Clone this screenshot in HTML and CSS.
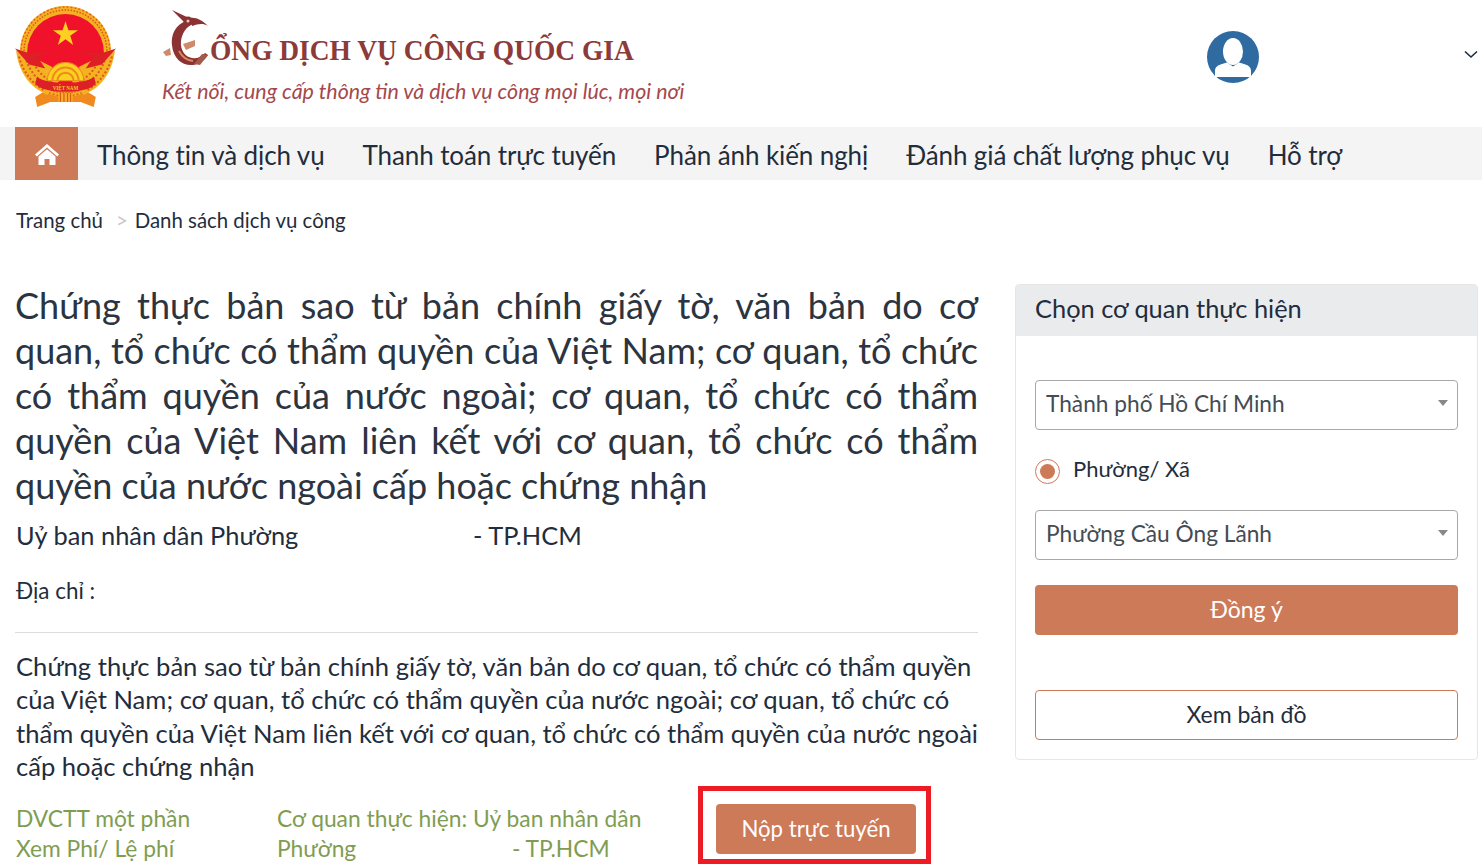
FILE: index.html
```html
<!DOCTYPE html>
<html lang="vi">
<head>
<meta charset="utf-8">
<title>Cổng Dịch vụ công Quốc gia</title>
<link rel="stylesheet" href="styles.css">
</head>
<body>
<header class="site-header">
  <svg class="emblem" viewBox="0 0 100 100" aria-hidden="true">
    <path d="M20 90 L33 82 H67 L80 90 L78 100 L65 95 H35 L22 100 Z" fill="#f08a1e"/>
    <circle cx="50" cy="45" r="45" fill="#f4b223"/>
    <circle cx="50" cy="45" r="44" fill="none" stroke="#e8601c" stroke-width="1.500" stroke-dasharray="2 2"/>
    <circle cx="50" cy="45" r="41" fill="none" stroke="#e0561c" stroke-width="1.500" stroke-dasharray="1.500 1.500"/>
    <circle cx="50" cy="46" r="38" fill="#f0112b"/>
    <path d="M50 15 L52.900 24 H62.400 L54.700 29.500 L57.600 38.500 L50 33 L42.400 38.500 L45.300 29.500 L37.600 24 H47.100 Z" fill="#fbd021"/>
    <path d="M1 44 C4 66 14 80 32 88 L44 74 L36 60 L12 48 Z" fill="#f4b223"/>
    <path d="M99 44 C96 66 86 80 68 88 L56 74 L64 60 L88 48 Z" fill="#f4b223"/>
    <path d="M4 50 C8 66 18 78 30 84 M10 50 C14 64 22 74 34 80 M17 53 C20 62 27 70 37 75" fill="none" stroke="#e0561c" stroke-width="2" stroke-dasharray="2 2"/>
    <path d="M96 50 C92 66 82 78 70 84 M90 50 C86 64 78 74 66 80 M83 53 C80 62 73 70 63 75" fill="none" stroke="#e0561c" stroke-width="2" stroke-dasharray="2 2"/>
    <path d="M0 42 L12 46 L36 46 L22 50 L30 62 L14 58 Z" fill="#dd1f26"/>
    <path d="M100 42 L88 46 L64 46 L78 50 L70 62 L86 58 Z" fill="#dd1f26"/>
    <path d="M32 74 A18 18 0 0 1 68 74 Z" fill="#fbd021" stroke="#ee8a1c" stroke-width="1"/>
    <path d="M37 74 A13 13 0 0 1 63 74 M42 74 A8 8 0 0 1 58 74" fill="none" stroke="#ee8a1c" stroke-width="2"/>
    <path d="M22 70 C30 78 70 78 78 70 L80 76 C76 88 24 88 20 76 Z" fill="#dd1f26"/>
    <text class="emblem-label" x="50" y="83" text-anchor="middle">VIỆT NAM</text>
    <path d="M43 86 H57 V95 H43 Z" fill="#f4b223"/>
    <path d="M45 86 V95 M48.500 86 V95 M52 86 V95 M55 86 V95" stroke="#e0561c" stroke-width="1.200"/>
  </svg>
  <div class="brand">
    <div class="brand-name">
      <svg class="brand-mark" viewBox="0 0 52 64" aria-hidden="true">
        <path d="M10 2 L27 10 L24 16 Z" fill="#8c3232"/>
        <path d="M29 12 C14 14 9 26 10 37 C11 50 20 58 31 57 C38 56 43 52 46 47 L43 45 C39 49 35 51 30 50 C23 49 18 42 19 33 C20 25 24 19 31 16 Z" fill="#8c3232"/>
        <circle cx="26" cy="13" r="4.500" fill="#8c3232"/>
        <circle cx="26" cy="13" r="1.500" fill="#e9c5b2"/>
        <path d="M28 10 C34 9 40 12 46 18 C41 15 36 16 30 18 Z" fill="#8c3232"/>
        <path d="M17 43 C20 49 24 52 31 53" fill="none" stroke="#d98a5e" stroke-width="1.800"/>
        <path d="M1 44 L8 40 L9 47 L4 48 Z M21 36 L33 32 L33 38 L24 42 Z" fill="#cf8a6c"/>
        <path d="M32 56 L40 46 L46 47 L38 57 Z" fill="#a55a48"/>
      </svg>
      <span class="brand-title">ỔNG DỊCH VỤ CÔNG QUỐC GIA</span>
    </div>
    <div class="brand-slogan">Kết nối, cung cấp thông tin và dịch vụ công mọi lúc, mọi nơi</div>
  </div>
  <div class="user">
    <svg class="avatar" viewBox="0 0 52 52" aria-hidden="true">
      <circle cx="26" cy="26" r="26" fill="#2f6aa0"/>
      <ellipse cx="26" cy="20.500" rx="10" ry="13.500" fill="#fff"/>
      <path d="M8 46 V40 C8 36 11 34 15 33 L20 31.500 L26 35.500 L32 31.500 L37 33 C41 34 44 36 44 40 V46 Z" fill="#fff"/>
    </svg>
    <svg class="chevron" viewBox="0 0 14 9" aria-hidden="true"><path d="M1 1.500 L7 7 L13 1.500" fill="none" stroke="#1c2b3a" stroke-width="1.600"/></svg>
  </div>
</header>

<nav class="main-nav">
  <a class="nav-home" href="#" aria-label="Trang chủ">
    <svg viewBox="0 0 26 22" aria-hidden="true">
      <path d="M13 1 L1 11.500 L2.800 13.500 L13 4.500 L23.200 13.500 L25 11.500 Z" fill="#fff"/>
      <path d="M4.500 13.500 L13 6.200 L21.500 13.500 V22 H15.500 V16 H10.500 V22 H4.500 Z" fill="#fff"/>
    </svg>
  </a>
  <a href="#">Thông tin và dịch vụ</a>
  <a href="#">Thanh toán trực tuyến</a>
  <a href="#">Phản ánh kiến nghị</a>
  <a href="#">Đánh giá chất lượng phục vụ</a>
  <a href="#">Hỗ trợ</a>
</nav>

<div class="breadcrumb">
  <a href="#">Trang chủ</a><span class="sep">&gt;</span><a href="#">Danh sách dịch vụ công</a>
</div>

<main class="content">
  <section class="detail">
    <h1 class="detail-title">Chứng thực bản sao từ bản chính giấy tờ, văn bản do cơ quan, tổ chức có thẩm quyền của Việt Nam; cơ quan, tổ chức có thẩm quyền của nước ngoài; cơ quan, tổ chức có thẩm quyền của Việt Nam liên kết với cơ quan, tổ chức có thẩm quyền của nước ngoài cấp hoặc chứng nhận</h1>
    <div class="office"><span class="office-name">Uỷ ban nhân dân Phường</span><span>- TP.HCM</span></div>
    <div class="address">Địa chỉ :</div>
    <p class="description">Chứng thực bản sao từ bản chính giấy tờ, văn bản do cơ quan, tổ chức có thẩm quyền của Việt Nam; cơ quan, tổ chức có thẩm quyền của nước ngoài; cơ quan, tổ chức có thẩm quyền của Việt Nam liên kết với cơ quan, tổ chức có thẩm quyền của nước ngoài cấp hoặc chứng nhận</p>
    <div class="meta">
      <div class="meta-type">
        <div>DVCTT một phần</div>
        <div>Xem Phí/ Lệ phí</div>
      </div>
      <div class="meta-agency">
        <div>Cơ quan thực hiện: Uỷ ban nhân dân</div>
        <div><span class="ward">Phường</span>- TP.HCM</div>
      </div>
      <div class="highlight"><button class="btn btn-submit" type="button">Nộp trực tuyến</button></div>
    </div>
  </section>

  <aside class="panel">
    <div class="panel-head">Chọn cơ quan thực hiện</div>
    <div class="panel-body">
      <div class="select"><span>Thành phố Hồ Chí Minh</span><i class="caret"></i></div>
      <label class="radio"><span class="radio-dot"></span><span class="radio-label">Phường/ Xã</span></label>
      <div class="select"><span>Phường Cầu Ông Lãnh</span><i class="caret"></i></div>
      <button class="btn btn-ok" type="button">Đồng ý</button>
      <button class="btn btn-map" type="button">Xem bản đồ</button>
    </div>
  </aside>
</main>
</body>
</html>
```

FILE: styles.css
```css
* { box-sizing: border-box; }
html, body { margin: 0; height: 865px; overflow: hidden; }
body {
  font-family: Lato, "Noto Sans", sans-serif;
  color: #1f2d3d;
  background: #fff;
  font-size: 22px;
}
a { color: inherit; text-decoration: none; }

.site-header { height: 127px; display: flex; align-items: flex-start; padding: 6px 0 0 15px; }
.emblem { width: 101px; height: 101px; flex: none; }
.emblem-label { font-family: "Liberation Serif", serif; font-size: 5px; font-weight: 700; fill: #fbd021; }
.brand { margin-left: 46px; width: 560px; padding-top: 3px; }
.brand-name { display: flex; align-items: flex-end; height: 58px; }
.brand-mark { width: 52px; height: 64px; flex: none; margin-bottom: -5px; }
.brand-title {
  font-family: "Liberation Serif", serif;
  font-weight: 700;
  font-size: 30px;
  line-height: 34px;
  color: #8c3a3a;
  margin-left: -4px;
  white-space: nowrap;
  transform: scaleX(0.914);
  transform-origin: left center;
}
.brand-slogan { font-size: 21.400px; font-style: italic; color: #a5484c; margin-top: 12px; white-space: nowrap; line-height: 24px; }
.user { flex: 1; display: flex; justify-content: space-between; align-items: flex-start; padding: 25px 4px 0 485px; }
.avatar { width: 52px; height: 52px; }
.chevron { width: 14px; height: 9px; margin-top: 19px; }

.main-nav { height: 53px; background: #f4f4f4; padding-left: 15px; display: flex; align-items: center; gap: 38px; font-size: 26px; letter-spacing: -0.1px; color: #1f2d3d; }
.main-nav a:not(.nav-home) { padding-top: 2px; }
.nav-home { width: 63px; height: 53px; background: #cd7a58; display: flex; align-items: center; justify-content: center; margin-right: -19px; }
.nav-home svg { width: 26px; height: 22px; }

.breadcrumb { padding: 27px 16px 0; font-size: 20.400px; line-height: 26px; }
.sep { color: #c8c8c8; margin: 0 7px 0 13px; }

.content { display: flex; align-items: flex-start; gap: 37px; padding: 51px 4px 0 15px; }
.detail { width: 963px; flex: none; }
.detail-title { margin: -1px 0 0; font-weight: 400; font-size: 36px; line-height: 45px; text-align: justify; color: #2b3440; }
.office { font-size: 25.400px; line-height: 34px; margin-top: 10px; padding-left: 1px; }
.office-name { display: inline-block; width: 457px; }
.address { font-size: 22.400px; line-height: 28px; margin-top: 25px; padding: 0 0 27px 1px; border-bottom: 1px solid #dcdcdc; }
.description { margin: 17px 0 0; font-size: 25.600px; line-height: 33.300px; padding-left: 1px; color: #1f2d3d; }
.meta { display: flex; color: #7f9d52; font-size: 22.800px; line-height: 30px; margin-top: 3px; }
.meta-type { width: 262px; padding: 17px 0 0 1px; }
.meta-agency { width: 421px; padding-top: 17px; }
.ward { display: inline-block; width: 235px; }
.highlight { width: 233px; height: 78px; border: 5px solid #ed1c24; padding: 13px 0 0 13px; }

.btn { font-family: inherit; border-radius: 4px; cursor: pointer; padding: 0 0 2px; }
.btn-submit { width: 200px; height: 50px; background: #cd7a58; color: #fff; border: 0; font-size: 22.200px; }

.panel { width: 463px; border: 1px solid #e6e6e6; border-radius: 4px; height: 476px; }
.panel-head { height: 51px; background: #e9ebed; padding: 0 19px 3px; font-size: 25.400px; line-height: 47px; }
.panel-body { padding: 44px 19px 0; display: flex; flex-direction: column; }
.select { height: 50px; border: 1px solid #a8a8a8; border-radius: 4px; padding: 0 9px 4px 10px; display: flex; align-items: center; justify-content: space-between; font-size: 22.700px; color: #444c54; }
.caret { width: 0; height: 0; border-left: 5px solid transparent; border-right: 5px solid transparent; border-top: 6px solid #888; }
.radio { height: 30px; margin: 26px 0 24px; display: flex; align-items: center; gap: 13px; font-size: 22px; line-height: 26px; }
.radio-label { padding-bottom: 4px; }
.radio-dot { width: 25px; height: 25px; border: 1px solid #cd7a58; border-radius: 50%; display: flex; align-items: center; justify-content: center; }
.radio-dot::before { content: ""; width: 15px; height: 15px; border-radius: 50%; background: #cd7a58; }
.btn-ok { height: 50px; margin-top: 25px; background: #cd7a58; color: #fff; border: 0; font-size: 23px; }
.btn-map { height: 50px; margin-top: 55px; background: #fff; color: #1f2d3d; border: 1px solid #cd7a58; font-size: 23px; }
```
